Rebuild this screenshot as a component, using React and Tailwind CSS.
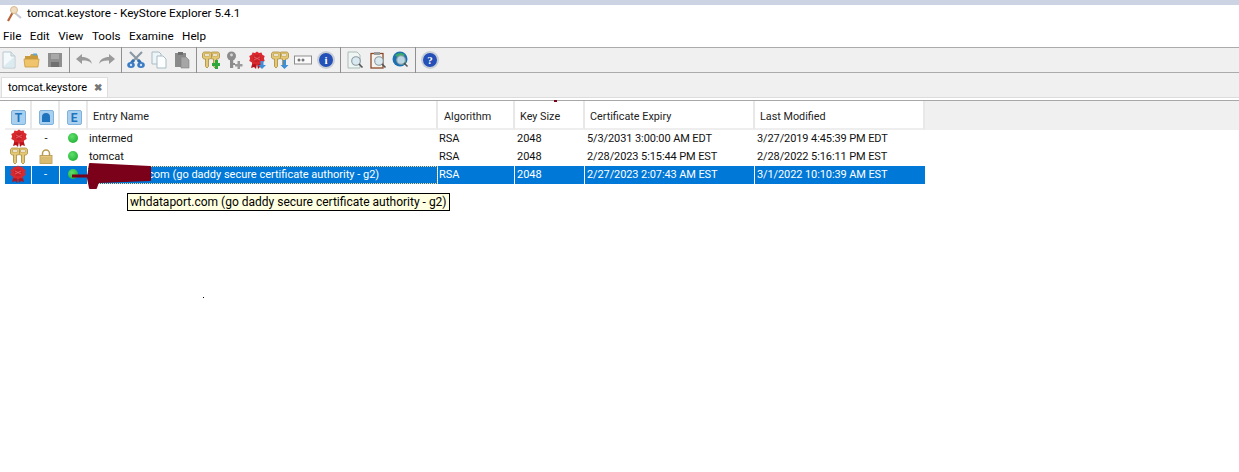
import React from "react";

const S = ({ children, w = 18, h = 18, vb = "0 0 18 18", className = "" }) => (
  <svg width={w} height={h} viewBox={vb} className={"shrink-0 block " + className}>{children}</svg>
);

const NewDoc = () => (
  <S><path d="M3 1h8l4 4v12H3z" fill="#f4f9fb" stroke="#b9c9d0" /><path d="M11 1v4h4" fill="#dbe8ec" stroke="#b9c9d0" /><path d="M4 15L14 6v10H4z" fill="#dcebf0" /></S>
);
const Open = () => (
  <S><path d="M2 5h5l1-2h6l1 2v3H2z" fill="#c99a3c" /><rect x="10" y="2.500" width="4" height="2" fill="#5aa7dc" /><path d="M1 8h15l-1 8H2z" fill="#f0c46c" stroke="#c99a3c" strokeWidth=".8" /></S>
);
const Save = () => (
  <S><path d="M2 2h14v14H2z" fill="#8f8f8f" /><rect x="5" y="3" width="8" height="5" fill="#a8a8a8" /><rect x="5" y="11" width="8" height="5" fill="#707070" /></S>
);
const Undo = () => (
  <S><path d="M1 8l6-5v3c5 0 9 2 10 7-2-3-5-3.500-10-3.500V13z" fill="#9a9a9a" /></S>
);
const Redo = () => (
  <S><path d="M17 8l-6-5v3C6 6 2 8 1 13c2-3 5-3.500 10-3.500V13z" fill="#9a9a9a" /></S>
);
const Cut = () => (
  <S>
    <path d="M3 1l11 11M15 1L4 12" stroke="#8c99a5" strokeWidth="2.200" />
    <path d="M7 9l-2.500 2.500M11 9l2.500 2.500" stroke="#2f6fb5" strokeWidth="3" />
    <ellipse cx="4" cy="14" rx="3.800" ry="3" fill="#3b7cc4" />
    <ellipse cx="14" cy="14" rx="3.800" ry="3" fill="#3b7cc4" />
    <circle cx="4" cy="14" r="1.200" fill="#cfe0f0" /><circle cx="14" cy="14" r="1.200" fill="#cfe0f0" />
  </S>
);
const Copy = () => (
  <S><path d="M2 1h7l2 2v10H2z" fill="#eef5f8" stroke="#a9bcc5" /><path d="M7 5h6l3 3v9H7z" fill="#fbfdfe" stroke="#a9bcc5" /></S>
);
const Paste = () => (
  <S><rect x="2" y="2" width="11" height="14" fill="#8a8a8a" /><rect x="5" y="1" width="5" height="3" fill="#6e6e6e" /><path d="M8 6h5l3 3v8H8z" fill="#a6a6a6" stroke="#808080" strokeWidth=".6" /></S>
);
const KeyShape = ({ x = 0, c = "#e3c878", d = "#a98a3a" }) => (
  <g transform={`translate(${x} 0)`}>
    <path d="M.5 3C.5 1.800 1.500 1 2.500 1h5c1 0 2 .8 2 2v3c0 1.200-1 2-2 2H6.500v7.500L5 17l-1.500-1.500V8h-1C1.500 8 .5 7.200 .5 6z" fill={c} stroke={d} strokeWidth=".8" />
    <rect x="2.500" y="3" width="5" height="2" fill="#fff" stroke={d} strokeWidth=".5" />
  </g>
);
const Keys = ({ badge }) => (
  <S w={18} h={18}>
    <KeyShape x={8} /><KeyShape x={0} />
    {badge === "plus" && <path d="M10 12h3V9h3v3h2v3h-2v3h-3v-3h-3z" fill="#2ea83c" />}
    {badge === "down" && <path d="M12 9h3v5h2.500l-4 4-4-4H12z" fill="#3d8fd8" />}
  </S>
);
const KeyGrey = () => (
  <S>
    <circle cx="6.500" cy="5" r="4.500" fill="#8c8c8c" /><circle cx="6.500" cy="4" r="1.400" fill="#d8d8d8" />
    <rect x="5" y="8" width="3.200" height="9" fill="#8c8c8c" /><rect x="8" y="12" width="2" height="2" fill="#8c8c8c" />
    <path d="M10 13h2.500v-3h2.500v3h2.500v2.500H15V18h-2.500v-2.500H10z" fill="#9a9a9a" />
  </S>
);
const Rosette = ({ badge }) => (
  <S>
    <path d="M5 10l-2 7 3-1 2 2 1-5zM13 10l2 7-3-1-2 2-1-5z" fill="#b5141c" />
    <path d="M9 .5l2 1.500 2.500-.5 .8 2.300 2.400 1.200-.8 2.500.8 2.500-2.400 1.200-.8 2.300-2.500-.5L9 14.500l-2-1.500-2.500.5-.8-2.300L1.300 10l.8-2.500-.8-2.500L3.700 3.800l.8-2.300 2.500.5z" fill="#d92a30" />
    <circle cx="9" cy="7.500" r="3.800" fill="#c9222a" />
    <path d="M6 6l6 3M6 9l6-3" stroke="#ee6a6a" strokeWidth=".8" />
    {badge && <path d="M12.500 10h3v4H18l-4 4-4-4h2.500z" fill="#3d8fd8" />}
  </S>
);
const Pwd = () => (
  <S><rect x=".5" y="5" width="17" height="8" fill="#fafafa" stroke="#8d8d8d" /><circle cx="5" cy="9" r="1.500" fill="#777" /><circle cx="9" cy="9" r="1.500" fill="#777" /></S>
);
const Round = ({ ch }) => (
  <span className="w-[18px] h-[18px] rounded-full shrink-0 flex items-center justify-center bg-[#2450b8] border-2 border-[#c9ced6] text-white text-[11px] leading-none font-bold font-['Liberation_Serif',serif]">
    {ch}
  </span>
);
const Mag = ({ x = 11, y = 11 }) => (
  <g>
    <circle cx={x - 1} cy={y - 1} r="4.300" fill="#d5e6ee" fillOpacity=".85" stroke="#8b9aa3" strokeWidth="1.100" />
    <path d={`M${x + 2} ${y + 2}l3.500 3.500`} stroke="#555" strokeWidth="1.600" />
  </g>
);
const ExamFile = () => (
  <S><path d="M2 1h9l3 3v13H2z" fill="#eef5f2" stroke="#a9bcb5" /><Mag /></S>
);
const ExamClip = () => (
  <S><rect x="2" y="2.500" width="12" height="14.500" fill="#f6f3ee" stroke="#8a4a2a" strokeWidth="1.300" /><rect x="5" y="1" width="6" height="3" fill="#9a9a9a" /><Mag /></S>
);
const ExamGlobe = () => (
  <S>
    <circle cx="8" cy="8" r="7.500" fill="#1c6fb0" />
    <path d="M3 4c3-2 7-3 10 0-2 1-3 3-5 2S5 7 3 4zM11 9c2 0 3 1 3 2l-3 3c-1-1-1-3 0-5z" fill="#3aa86c" />
    <Mag x={10} y={10} />
  </S>
);

const Sep = () => <div className="w-px h-[26px] bg-[#8f8f8f] shrink-0" />;

const Dot = () => (
  <span className="w-[10px] h-[10px] rounded-full block -translate-x-px bg-[radial-gradient(circle_at_40%_35%,#5fe06a,#12a52a)]" />
);

const cols = [
  "w-[27px] justify-center",
  "w-[28px] justify-center",
  "w-[28px] justify-center",
  "w-[350px] pl-px",
  "w-[77px] pl-px",
  "w-[70px] pl-[2px]",
  "w-[170px] pl-[2px] tracking-[-0.1px]",
  "w-[170px] pl-[2px] tracking-[-0.1px]",
];

const Lock = () => (
  <S w={14} h={15} vb="0 0 14 15">
    <path d="M3.500 7V4.500a3.500 3.500 0 0 1 7 0V7" fill="none" stroke="#b89a50" strokeWidth="1.500" />
    <rect x="1" y="6.500" width="12" height="8" fill="#e3c77e" stroke="#b3964e" strokeWidth=".8" />
    <path d="M2 9h10M2 11h10M2 13h10" stroke="#c9aa60" strokeWidth=".8" />
  </S>
);

const HeadIcon = ({ children }) => (
  <span className="w-[15px] h-[15px] rounded-[2px] bg-[#a9d0ee] border border-[#7fb2dc] flex items-center justify-center text-[#1f74bd] text-[12px] leading-none font-bold">
    {children}
  </span>
);

const Row = ({ cells, selected }) => (
  <div className={"flex h-[18px] w-[920px] " + (selected ? "text-white" : "text-[#111]")}>
    {cells.map((c, i) => (
      <div
        key={i}
        className={
          "flex items-center pb-[2px] whitespace-nowrap shrink-0 " + cols[i] + " " +
          (selected ? "bg-[#0078d7] " : "") +
          (selected && i < 7 ? "border-r border-white " : "") +
          (selected && i === 3 ? "outline-1 outline-dotted outline-offset-[-1px] outline-[#ffd98a] " : "")
        }
      >
        {c}
      </div>
    ))}
  </div>
);

export default function App() {
  const header = [
    <HeadIcon>T</HeadIcon>,
    <span className="w-[15px] h-[15px] rounded-[2px] bg-[#a9d0ee] border border-[#7fb2dc] flex items-center justify-center">
      <span className="w-[8px] h-[9px] rounded-t-[4px] bg-[#1f74bd] block" />
    </span>,
    <HeadIcon>E</HeadIcon>,
    "Entry Name",
    "Algorithm",
    "Key Size",
    "Certificate Expiry",
    "Last Modified",
  ];
  const headPad = ["pl-[2px]", "pl-[2px]", "pl-[2px]", "pl-[5px]", "pl-[6px]", "pl-[5px]", "pl-[5px]", "pl-[5px]"];
  const headW = ["w-[27px]", "w-[28px]", "w-[28px]", "w-[350px]", "w-[77px]", "w-[70px]", "w-[170px]", "w-[170px]"];

  return (
    <div className="relative w-[1239px] h-[472px] overflow-hidden bg-white flex flex-col text-[11px] leading-none text-black font-['Roboto',sans-serif]">
      <div className="h-[5px] bg-[#ccd3e2] shrink-0" />

      <div className="h-[17px] flex items-center gap-[4px] pl-[5px] shrink-0 text-[11.700px]">
        <S>
          <path d="M8 7L3 16" stroke="#b8643a" strokeWidth="2.200" />
          <path d="M10 8l6 5" stroke="#c8c8d4" strokeWidth="2.200" />
          <circle cx="9" cy="5" r="3.500" fill="#f0dcc0" stroke="#d8b890" />
        </S>
        <span>tomcat.keystore - KeyStore Explorer 5.4.1</span>
      </div>

      <div className="h-[25px] pt-[5px] flex items-center gap-[8.500px] pl-[3px] shrink-0 text-[11.700px]">
        <span>File</span><span>Edit</span><span>View</span><span>Tools</span><span>Examine</span><span>Help</span>
      </div>

      <div className="h-[26px] bg-[#f0f0f0] border-y border-[#ababab] flex items-center gap-[5px] shrink-0">
        <NewDoc /><Open /><Save /><Sep /><Undo /><Redo /><Sep /><Cut /><Copy /><Paste /><Sep />
        <Keys badge="plus" /><KeyGrey /><Rosette badge /><Keys badge="down" /><Pwd /><Round ch="i" /><Sep />
        <ExamFile /><ExamClip /><ExamGlobe /><Sep /><Round ch="?" />
      </div>

      <div className="h-[25px] bg-[#f0f0f0] border-b border-[#dcdcdc] flex items-end pl-px shrink-0">
        <div className="w-[107px] h-[20px] bg-white border border-b-0 border-[#dedede] flex items-center pl-[6px] gap-[7px] text-[11px]">
          <span>tomcat.keystore</span>
          <span className="text-[#777] text-[10px] font-bold">✖</span>
        </div>
      </div>

      <div className="h-[2px] shrink-0" />
      <div className="h-px bg-[#a8a8a8] shrink-0" />

      <div className="flex pl-[5px] h-[29px] shrink-0 text-[#222] text-[10.800px]">
        {header.map((h, i) => (
          <div
            key={i}
            className={
              "flex items-center shrink-0 pt-[6px] bg-white border-r-2 border-b-2 border-r-[#e8e8e8] border-b-[#eeeeee] " +
              headW[i] + " " + headPad[i] + (i < 3 ? " justify-center" : "")
            }
          >
            {h}
          </div>
        ))}
        <div className="flex-1 bg-[#f0f0f0]" />
      </div>

      <div className="flex flex-col pl-[5px]">
        <Row cells={[<Rosette />, "-", <Dot />, "intermed", "RSA", "2048", "5/3/2031 3:00:00 AM EDT", "3/27/2019 4:45:39 PM EDT"]} />
        <Row cells={[<Keys />, <Lock />, <Dot />, "tomcat", "RSA", "2048", "2/28/2023 5:15:44 PM EST", "2/28/2022 5:16:11 PM EST"]} />
        <Row selected cells={[<Rosette />, "-", <Dot />, "whdataport.com (go daddy secure certificate authority - g2)", "RSA", "2048", "2/27/2023 2:07:43 AM EST", "3/1/2022 10:10:39 AM EST"]} />
      </div>

      <svg width="90" height="30" viewBox="0 0 90 30" className="absolute left-[70px] top-[161px]">
        <path d="M2 15h20" stroke="#7b0019" strokeWidth="3" />
        <path d="M20 3L80 6V19L28 21 26 27H20L18 17z" fill="#7b0019" stroke="#7b0019" strokeWidth="2" strokeLinejoin="round" />
      </svg>

      <div className="absolute left-[127px] top-[193px] w-[323px] h-[18px] bg-[#ffffe1] border border-black flex items-center pl-[2px] whitespace-nowrap text-[12px]">
        whdataport.com (go daddy secure certificate authority - g2)
      </div>

      <span className="absolute left-[203px] top-[297px] w-px h-px bg-black" />
      <span className="absolute left-[554px] top-[100px] w-[3px] h-[2px] bg-[#7b0019]" />
    </div>
  );
}
